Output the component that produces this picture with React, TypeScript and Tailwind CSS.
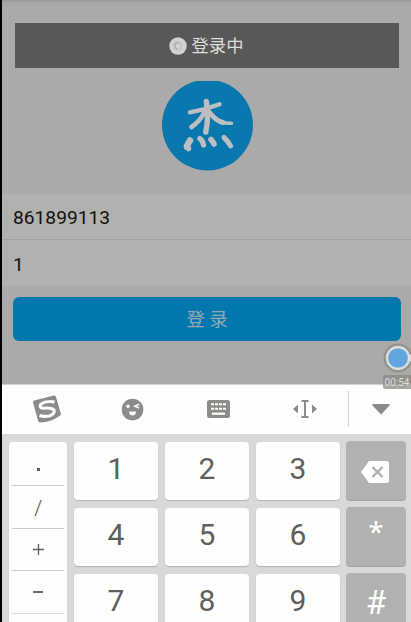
import React from "react";

const rows = [["1", "2", "3"], ["4", "5", "6"], ["7", "8", "9"]];

function Spinner() {
  return (
    <svg width="18" height="18" viewBox="0 0 18 18">
      <circle cx="9" cy="9" r="8.7" fill="#d2d2d0" />
      {Array.from({ length: 12 }, (_, i) => (
        <path key={i} d="M9 4.2V6.6" stroke={i < 4 || i > 9 ? "#bdbdbb" : "#a2a2a0"} strokeWidth="1.1" transform={`rotate(${i * 30 + 90} 9 9)`} />
      ))}
    </svg>
  );
}

function Avatar() {
  return (
    <svg className="mt-[12px] shrink-0 self-center" width="92" height="92" viewBox="0 0 92 92">
      <path d="M35 1H58A45.5 45.5 0 1 1 35 1Z" fill="#0878ae" />
      <g fill="none" stroke="#bcbfc1" strokeLinecap="round" strokeLinejoin="round">
        <path d="M29 32.300Q44 30 58.500 24.300" strokeWidth="4.400" />
        <path d="M45.300 21.500Q48 36 44.800 52" strokeWidth="5.400" />
        <path d="M43 33Q39 41 30.500 47" strokeWidth="4.600" />
        <path d="M48 32Q55 41 62 42.500" strokeWidth="5" />
        <path d="M60 42Q65 43.500 70.500 43.300" strokeWidth="3.600" />
        <path d="M29 60.500Q27 63 26 67" strokeWidth="6.400" />
        <path d="M25.500 66L27.500 68.500" strokeWidth="5.500" />
        <path d="M38.800 58.500Q41.500 60 42.500 65" strokeWidth="5.200" />
        <path d="M50 59.500Q51.500 61 53 64" strokeWidth="5.600" />
        <path d="M63 57.500Q67 61 69.500 66" strokeWidth="5" />
      </g>
    </svg>
  );
}

function Toolbar() {
  return (
    <div className="flex h-[50px] shrink-0 items-center border-t border-[#d1d1cf] bg-[#fefefc] pb-px text-[#8b8b89]">
      <svg className="ml-[30px]" width="30" height="30" viewBox="0 0 30 30">
        <path d="M2.200 6.500L22 1.500Q23.500 1 24 3L29 20Q29 21.500 27.500 22Q19 28 8 28.500Q6.500 28.500 6 26.500L1 8.500Q.8 7 2.200 6.500Z" fill="currentColor" />
        <path d="M22.500 8Q14 6.500 9 10Q6.500 13.500 11 14.300Q19 13.200 22 16Q23.500 20 17 22Q12 23 7.500 21.500" fill="none" stroke="#fefefc" strokeWidth="3.100" />
      </svg>
      <svg className="ml-[59px]" width="23" height="23" viewBox="0 0 23 23">
        <circle cx="11.500" cy="11.500" r="10.800" fill="currentColor" />
        <circle cx="7" cy="8.200" r="1.700" fill="#fefefc" />
        <path d="M18.200 6.200L13.800 8.300L18.200 10" fill="none" stroke="#fefefc" strokeWidth="1.500" />
        <path d="M8 13.500H15Q15 17.500 11.500 17.500Q8 17.500 8 13.500Z" fill="#fefefc" />
      </svg>
      <svg className="ml-[63px]" width="23" height="18" viewBox="0 0 23 18">
        <rect width="23" height="18" rx="2.500" fill="currentColor" />
        <path d="M4 4.200H19M4 8.700H19" stroke="#fefefc" strokeWidth="2" strokeDasharray="3 1 3 1 3 1 3 1" />
        <path d="M5 13.700H18" stroke="#fefefc" strokeWidth="2.200" />
      </svg>
      <svg className="ml-[63px]" width="24" height="18" viewBox="0 0 24 18">
        <path d="M0 9L5 4.500V13.500ZM24 9L19 4.500V13.500Z" fill="currentColor" />
        <path d="M8.500 1H15.500M12 1V17M8.500 17H15.500" fill="none" stroke="currentColor" strokeWidth="2" />
      </svg>
      <div className="ml-[31px] h-9 w-px bg-[#d2d2d0]" />
      <svg className="ml-[23px]" width="18" height="12" viewBox="0 0 18 12">
        <path d="M.5 1H17.500V2.500L9 11.500L.5 2.500Z" fill="currentColor" />
      </svg>
    </div>
  );
}

function Keypad() {
  return (
    <div className="flex min-h-0 flex-1 items-start overflow-hidden bg-[#d9d9d8] pl-[7px] pt-[7px] text-[#5e5e5c]">
      <div className="mt-px h-[200px] w-[58px] shrink-0 rounded-[4px] bg-[#fefefc] px-[3px] shadow-[0_1px_1px_#b4b4b3]">
        <div className="flex h-11 items-center justify-center border-b border-[#cbcbc9]"><div className="mt-[11px] h-[3px] w-[3px] bg-[#5e5e5c]" /></div>
        <div className="flex h-[43px] items-center justify-center border-b border-[#cbcbc9] font-['Noto_Sans'] text-[22px] font-light leading-none">/</div>
        <div className="flex h-[42px] items-center justify-center border-b border-[#cbcbc9]">
          <svg width="11" height="11" viewBox="0 0 11 11"><path d="M0 5.500H11M5.500 0V11" stroke="currentColor" strokeWidth="1.300" /></svg>
        </div>
        <div className="flex h-[43px] items-center justify-center border-b border-[#dededc]"><div className="h-[1.500px] w-[10px] bg-[#6a6a68]" /></div>
      </div>
      <div className="ml-[7px] grid shrink-0 grid-cols-[84px_84px_84px] gap-[7px]">
        {rows.flat().map((n) => (
          <div key={n} className="mt-px flex h-[58px] items-center justify-center rounded-[4px] bg-[#fefefc] pb-[4px] text-[30px] leading-none shadow-[0_1px_1px_#b4b4b3]">{n}</div>
        ))}
      </div>
      <div className="ml-[6px] grid w-[60px] shrink-0 gap-[6px] text-white">
        <div className="flex h-[60px] items-center justify-center rounded-[4px] border-b border-[#a3a3a1] bg-[#b1b1af]">
          <svg className="-ml-[2px] mt-[2px]" width="28" height="22" viewBox="0 0 28 22">
            <path d="M8 0H25.500Q28 0 28 2.500V19.500Q28 22 25.500 22H8L0 11Z" fill="#fefefc" />
            <path d="M11.500 6L21.500 16M21.500 6L11.500 16" stroke="#b1b1af" strokeWidth="2.300" />
          </svg>
        </div>
        <div className="flex h-[60px] items-center justify-center rounded-[4px] border-b border-[#a3a3a1] bg-[#b1b1af] pb-[12px] font-['Noto_Sans'] text-[28px] leading-none">*</div>
        <div className="flex h-[60px] items-center justify-center rounded-[4px] border-b border-[#a3a3a1] bg-[#b1b1af] text-[33px] leading-none">#</div>
      </div>
    </div>
  );
}

export default function App() {
  return (
    <div className="relative flex h-[622px] w-[411px] flex-col overflow-hidden border-l-2 border-black bg-[#aaaaa8] font-[Roboto,'Noto_Sans_CJK_SC',sans-serif]">
      <div className="flex h-[384px] shrink-0 flex-col bg-[linear-gradient(#969694_0px,#a5a5a3_2px,#aaaaa8_5px)]">
        <div className="ml-[13px] mr-[12px] mt-[23px] flex h-[45px] shrink-0 items-center justify-center gap-[5px] bg-[#585856] pr-[2px] text-[17.3px] text-[#dededc]">
          <Spinner /><span className="pt-[2px]">登录中</span>
        </div>
        <Avatar />
        <div className="mt-[22px] flex h-[46px] shrink-0 items-center border-b border-[#a1a19f] bg-[#b1b1af] pl-[11px] pt-[3px] text-[19.2px] text-[#111110]">861899113</div>
        <div className="flex h-[46px] shrink-0 items-center bg-[#b1b1af] pl-[11px] pt-[4px] text-[19.2px] text-[#111110]">1</div>
        <div className="ml-[11px] mr-[10px] mt-[11px] flex h-11 shrink-0 items-center justify-center rounded-[6px] bg-[#0378af] pt-[3px] text-[18.5px] text-[#94a8b1]">登 录</div>
      </div>
      <Toolbar />
      <Keypad />
      <div className="absolute left-[381px] top-[343px] flex w-[28px] flex-col">
        <svg width="28" height="30" viewBox="0 0 28 30">
          <circle cx="15" cy="15" r="14.5" fill="#92928f" />
          <path d="M24.500 11.500H28V18.500H24.500Z" fill="#dededc" />
          <circle cx="15" cy="15" r="11" fill="#62a6e0" stroke="#dededc" strokeWidth="2.300" />
        </svg>
        <div className="mt-[2px] flex h-[14px] w-[28px] items-center justify-center rounded-l-[2px] bg-[#888886]/75 font-[Roboto] text-[10px] text-[#dededc]">00:54</div>
      </div>
    </div>
  );
}
